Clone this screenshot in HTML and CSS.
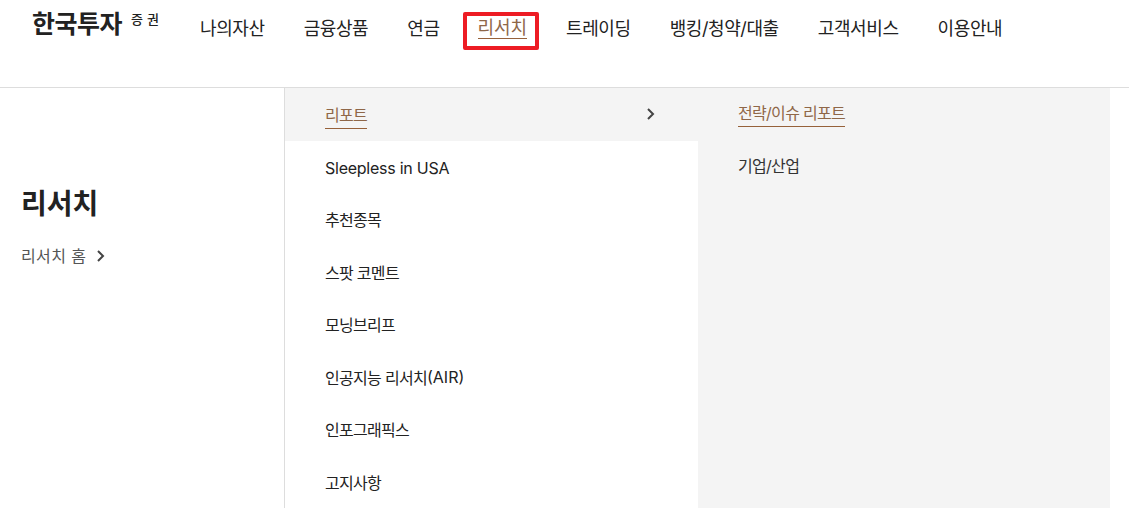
FILE: index.html
```html
<!DOCTYPE html>
<html lang="ko">
<head>
    <meta charset="UTF-8">
    <meta name="viewport" content="width=device-width, initial-scale=1.0">
    <title>리서치</title>
    <link rel="stylesheet" href="styles.css">
</head>
<body>
    <header class="header">
        <a class="logo">한국투자<span class="logo-sub">증권</span></a>
        <nav class="gnb">
            <a class="gnb-item">나의자산</a>
            <a class="gnb-item">금융상품</a>
            <a class="gnb-item">연금</a>
            <span class="gnb-mark"><a class="gnb-item active">리서치</a></span>
            <a class="gnb-item">트레이딩</a>
            <a class="gnb-item">뱅킹/청약/대출</a>
            <a class="gnb-item">고객서비스</a>
            <a class="gnb-item">이용안내</a>
        </nav>
    </header>
    <div class="menu">
        <aside class="side">
            <h2 class="side-title">리서치</h2>
            <a class="side-link">리서치 홈
                <svg class="chevron" width="12" height="14" viewBox="0 0 12 14"><path d="M3 2l5 5-5 5" fill="none" stroke="#444" stroke-width="2"/></svg>
            </a>
        </aside>
        <ul class="depth2">
            <li class="depth2-item on">
                <span class="under">리포트</span>
                <svg class="chevron" width="12" height="14" viewBox="0 0 12 14"><path d="M3 2l5 5-5 5" fill="none" stroke="#444" stroke-width="2"/></svg>
            </li>
            <li class="depth2-item latin">Sleepless in USA</li>
            <li class="depth2-item">추천종목</li>
            <li class="depth2-item">스팟 코멘트</li>
            <li class="depth2-item">모닝브리프</li>
            <li class="depth2-item">인공지능 리서치<span class="latin">(AIR)</span></li>
            <li class="depth2-item">인포그래픽스</li>
            <li class="depth2-item">고지사항</li>
        </ul>
        <ul class="depth3">
            <li class="depth3-item"><span class="under">전략/이슈 리포트</span></li>
            <li class="depth3-item">기업/산업</li>
        </ul>
    </div>
</body>
</html>
```

FILE: styles.css
```css
* {
    box-sizing: border-box;
}
html, body {
    height: 100%;
    overflow: hidden;
}
body {
    margin: 0;
    font-family: Inter, "Noto Sans CJK KR", "Noto Sans", sans-serif;
    color: #222;
    background: #fff;
}
ul {
    list-style: none;
    margin: 0;
    padding: 0;
}
.header {
    display: flex;
    align-items: flex-start;
    height: 88px;
    padding-left: 32px;
    border-bottom: 1px solid #ddd;
}
.logo {
    display: flex;
    align-items: flex-start;
    width: 168px;
    padding-top: 7px;
    font-size: 25px;
    line-height: 35px;
    font-weight: 700;
    letter-spacing: -0.5px;
    color: #222;
}
.logo-sub {
    margin-left: 9px;
    font-size: 13px;
    line-height: 24px;
    font-weight: 500;
    letter-spacing: 4px;
}
.gnb {
    display: flex;
    align-items: flex-start;
    gap: 39px;
    padding-top: 12px;
}
.gnb-item {
    display: block;
    margin-top: 4px;
    font-size: 18px;
    line-height: 26px;
    letter-spacing: -0.4px;
    color: #222;
}
.gnb-mark {
    display: block;
    height: 38px;
    margin: 0 -12px 0 -16px;
    padding: 0 8px 0 11px;
    border: 4px solid #ed1c24;
    border-radius: 2px;
}
.gnb-item.active {
    margin-top: 0;
    padding-top: 2px;
    line-height: 20px;
    letter-spacing: -0.1px;
    color: #8f6748;
    border-bottom: 1px solid #96613a;
}
.menu {
    display: grid;
    grid-template-columns: 285px 413px 412px;
    height: 420px;
}
.side {
    padding: 96px 0 0 21px;
    border-right: 1px solid #ddd;
}
.side-title {
    margin: 0;
    font-size: 28px;
    line-height: 40px;
    font-weight: 700;
    color: #222;
}
.side-link {
    display: flex;
    align-items: center;
    gap: 9px;
    margin-top: 20px;
    font-size: 16px;
    line-height: 24px;
    letter-spacing: 0.4px;
    color: #555;
}
.depth2-item {
    display: flex;
    align-items: center;
    justify-content: space-between;
    height: 52.500px;
    padding: 0 41px 0 40px;
    font-size: 16px;
    letter-spacing: -0.7px;
    color: #222;
}
.depth2-item .latin {
    margin-right: auto;
    letter-spacing: 0;
}
.depth2-item.latin {
    padding-top: 2px;
    letter-spacing: -0.25px;
}
.depth2-item.on {
    background: #f4f4f4;
}
.under {
    margin-top: 2px;
    color: #8f6748;
    line-height: 26px;
    border-bottom: 1px solid #96613a;
}
.depth3 {
    background: #f4f4f4;
    padding: 0 0 0 40px;
}
.depth3-item {
    display: flex;
    align-items: center;
    height: 52.500px;
    margin-top: -0.500px;
    padding-bottom: 1px;
    font-size: 16px;
    letter-spacing: -0.7px;
    color: #333;
}
.depth3-item .under {
    margin-top: 1px;
}
```
